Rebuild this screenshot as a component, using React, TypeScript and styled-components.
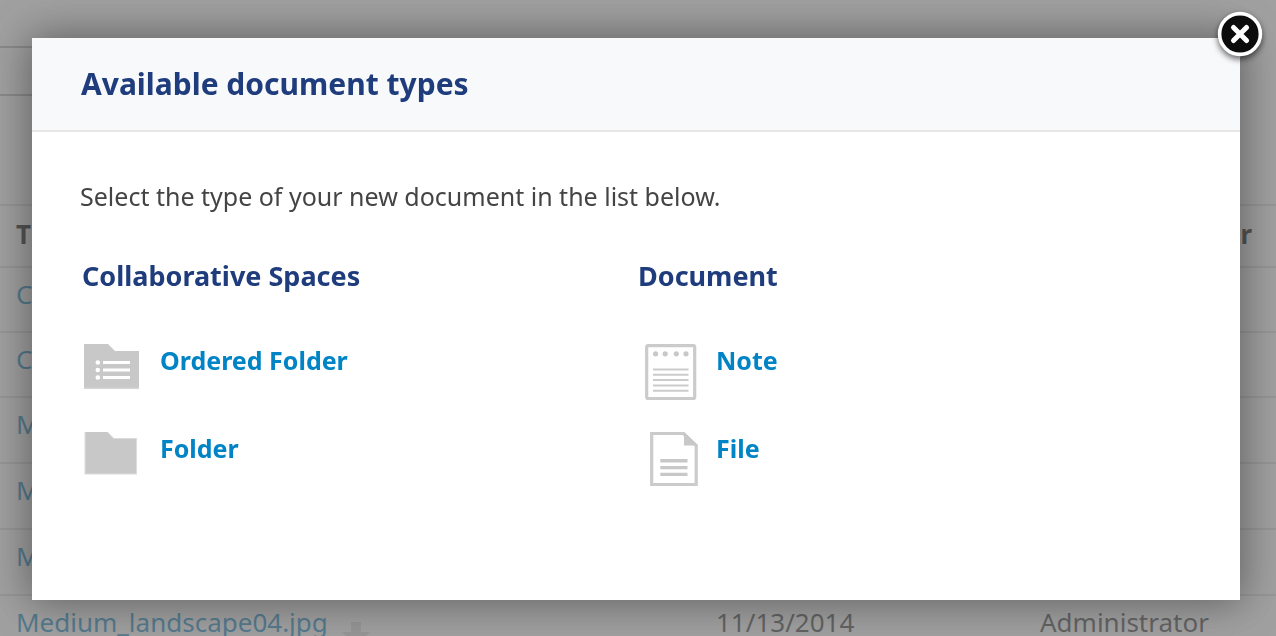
import React from "react";
import styled, { createGlobalStyle } from "styled-components";

const GlobalStyle = createGlobalStyle`
  *, *::before, *::after { box-sizing: border-box; }
  body {
    margin: 0;
    overflow: hidden;
    background: #fff;
    color: #333;
    font-family: "Noto Sans", "Open Sans", sans-serif;
    font-size: 26px;
    line-height: 36px;
  }
`;

const Page = styled.main`
  min-height: 100vh;
  padding-top: 46px;
`;

const TabStrip = styled.div`
  height: 50px;
  margin: 0 60px 108px 0;
  border: solid #b4b4b4;
  border-width: 2px 0;
`;

const Listing = styled.table`
  width: 100%;
  table-layout: fixed;
  border-collapse: collapse;
`;

const HeadCell = styled.th<{ $align?: string; $width?: string }>`
  height: 62px;
  width: ${(p) => p.$width ?? "auto"};
  padding: 10px 24px 0 16px;
  border-top: 2px solid #dcdcdc;
  vertical-align: top;
  text-align: ${(p) => p.$align ?? "left"};
  color: #000;
`;

const Cell = styled.td<{ $tall?: boolean }>`
  height: ${(p) => (p.$tall ? 66 : 65)}px;
  padding: 12px 0 0 16px;
  border-top: 2px solid #dcdcdc;
  vertical-align: top;
  line-height: 28px;
  white-space: nowrap;
`;

const RowLink = styled.a`
  color: #0080c0;
  text-decoration: none;
`;

const DownloadGlyph = styled.svg`
  margin: 14px 0 0 14px;
  vertical-align: top;
`;

const Overlay = styled.div`
  position: fixed;
  inset: 0;
  padding: 38px 36px 36px 32px;
  background: rgba(119, 119, 119, 0.7);
`;

const Dialog = styled.section`
  position: relative;
  display: flex;
  flex-direction: column;
  height: 100%;
  background: #fff;
  box-shadow: 0 0 40px 2px rgba(0, 0, 0, 0.42);
`;

const DialogHeader = styled.header`
  padding: 26px 48px 26px 49px;
  background: #f8f9fb;
  border-bottom: 2px solid #e6e6e6;
`;

const DialogTitle = styled.h1`
  margin: 0;
  color: #1f3d7d;
  font-size: 30px;
  line-height: 40px;
  font-weight: 700;
`;

const DialogBody = styled.div`
  flex: 1;
  padding: 48px 48px 0;
  font-size: 25px;
  line-height: 32px;
`;

const Intro = styled.p`
  margin: 0 0 46px;
  color: #444;
`;

const Columns = styled.div`
  display: grid;
  grid-template-columns: 1fr 1fr;
`;

const CategoryTitle = styled.h2`
  margin: 0 0 50px;
  padding-left: 2px;
  color: #1f3d7d;
  font-size: 27px;
  line-height: 36px;
  font-weight: 700;
`;

const TypeList = styled.ul`
  display: grid;
  gap: 28px;
  margin: 0;
  padding: 0 0 0 2px;
  list-style: none;
`;

const TypeLink = styled.a`
  display: flex;
  gap: 14px;
  height: 60px;
  color: #0084c5;
  font-weight: 700;
  text-decoration: none;
`;

const CloseButton = styled.button`
  position: absolute;
  top: -30px;
  right: -26px;
  width: 52px;
  height: 56px;
  padding: 0;
  border: 0;
  background: none;
  cursor: pointer;
  svg {
    display: block;
    filter: drop-shadow(0 3px 3px rgba(0, 0, 0, 0.6));
  }
`;

const OrderedFolderIcon = () => (
  <svg width="64" height="60" viewBox="0 0 64 60" aria-hidden="true">
    <path d="M2 0H26L33 7H57V45H2Z" fill="#c8c8c8" />
    <path d="M2 43.5H57V45H2Z" fill="#d4d4d4" />
    <g fill="#fff">
      <circle cx="15.8" cy="18.5" r="2.3" />
      <circle cx="15.8" cy="26" r="2.3" />
      <circle cx="15.8" cy="33.5" r="2.3" />
      <path d="M21 17H48V20H21ZM21 24.5H48V27.5H21ZM21 32H48V35H21Z" />
    </g>
  </svg>
);

const FolderIcon = () => (
  <svg width="64" height="60" viewBox="0 0 64 60" aria-hidden="true">
    <path d="M2.5 0H26L32 6H55V42.5H2.5Z" fill="#dcdcdc" />
    <path d="M3.5 0H25L31.5 7H54V41.5H3.5Z" fill="#c8c8c8" />
  </svg>
);

const NoteIcon = () => (
  <svg width="64" height="60" viewBox="0 0 64 60" aria-hidden="true">
    <rect x="8.7" y="1.7" width="48" height="52.8" rx="1.5" fill="#fff" stroke="#cbcbcb" strokeWidth="3.2" />
    <g fill="#c8c8c8">
      <circle cx="17.6" cy="9.8" r="2.6" />
      <circle cx="27.2" cy="9.8" r="2.6" />
      <circle cx="38.3" cy="9.8" r="2.6" />
      <circle cx="48" cy="9.8" r="2.6" />
    </g>
    <path
      d="M15 25.4H50.5M15 30.8H50.5M15 36.1H50.5M15 41.4H50.5M15 46.7H50.5"
      stroke="#cbcbcb"
      strokeWidth="2"
    />
  </svg>
);

const FileIcon = () => (
  <svg width="64" height="60" viewBox="0 0 64 60" aria-hidden="true">
    <path d="M13.7 1.5H45.5L58.2 13.5V52.5H13.7Z" fill="#fff" stroke="#cbcbcb" strokeWidth="3.2" />
    <path d="M46 0L59.8 13.5H46Z" fill="#c8c8c8" />
    <path d="M22.3 28.8H49.5M22.3 35.6H49.5M22.3 42.4H49.5" stroke="#c8c8c8" strokeWidth="3.4" />
  </svg>
);

const categories = [
  {
    title: "Collaborative Spaces",
    types: [
      { label: "Ordered Folder", Icon: OrderedFolderIcon },
      { label: "Folder", Icon: FolderIcon },
    ],
  },
  {
    title: "Document",
    types: [
      { label: "Note", Icon: NoteIcon },
      { label: "File", Icon: FileIcon },
    ],
  },
];

const rows = [
  { title: "C" },
  { title: "C" },
  { title: "M", file: true },
  { title: "M", file: true },
  { title: "M", file: true },
  {
    title: "Medium_landscape04.jpg",
    file: true,
    download: true,
    modified: "11/13/2014",
    contributor: "Administrator",
  },
];

export default function App() {
  return (
    <>
      <GlobalStyle />
      <Page>
        <TabStrip />
        <Listing>
          <thead>
            <tr>
              <HeadCell>T</HeadCell>
              <HeadCell $width="324px" />
              <HeadCell $width="252px" $align="right">
                r
              </HeadCell>
            </tr>
          </thead>
          <tbody>
            {rows.map((row, i) => (
              <tr key={i}>
                <Cell $tall={row.file}>
                  <RowLink href="#">{row.title}</RowLink>
                  {row.download && (
                    <DownloadGlyph width="28" height="28" viewBox="0 0 28 28" aria-hidden="true">
                      <path d="M9 0H19V10H28L14 24L0 10H9Z" fill="#dcdcdc" />
                    </DownloadGlyph>
                  )}
                </Cell>
                <Cell $tall={row.file}>{row.modified}</Cell>
                <Cell $tall={row.file}>{row.contributor}</Cell>
              </tr>
            ))}
          </tbody>
        </Listing>
      </Page>
      <Overlay>
        <Dialog role="dialog" aria-modal="true" aria-labelledby="dialog-title">
          <DialogHeader>
            <DialogTitle id="dialog-title">Available document types</DialogTitle>
          </DialogHeader>
          <DialogBody>
            <Intro>Select the type of your new document in the list below.</Intro>
            <Columns>
              {categories.map(({ title, types }) => (
                <div key={title}>
                  <CategoryTitle>{title}</CategoryTitle>
                  <TypeList>
                    {types.map(({ label, Icon }) => (
                      <li key={label}>
                        <TypeLink href="#">
                          <Icon />
                          <span>{label}</span>
                        </TypeLink>
                      </li>
                    ))}
                  </TypeList>
                </div>
              ))}
            </Columns>
          </DialogBody>
          <CloseButton type="button" aria-label="Close">
            <svg width="52" height="56" viewBox="0 0 52 56">
              <circle cx="26" cy="26" r="20.4" fill="#0c0c0c" stroke="#fff" strokeWidth="3.6" />
              <path d="M19.5 19.5L32.5 32.5M32.5 19.5L19.5 32.5" stroke="#fff" strokeWidth="5" strokeLinecap="round" />
            </svg>
          </CloseButton>
        </Dialog>
      </Overlay>
    </>
  );
}
